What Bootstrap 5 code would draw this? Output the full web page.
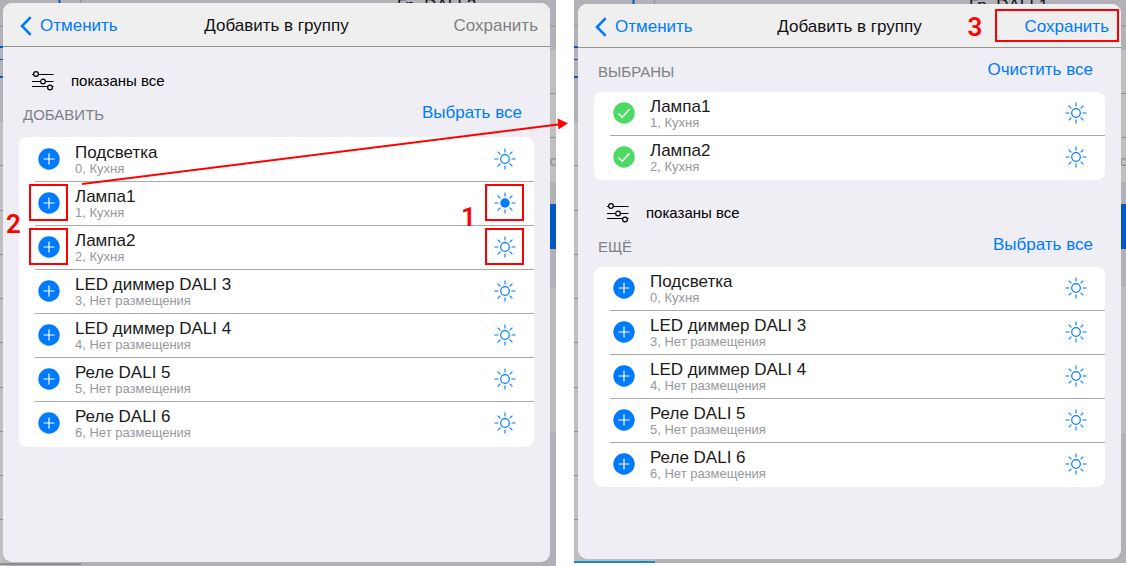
<!DOCTYPE html>
<html lang="ru">
<head>
<meta charset="utf-8">
<meta name="viewport" content="width=device-width, initial-scale=1">
<title>Добавить в группу</title>
<link href="https://cdn.jsdelivr.net/npm/bootstrap@5.3.0/dist/css/bootstrap.min.css" rel="stylesheet">
<style>
:root { --ios-blue: #007aff; --shade: #b2b1b8; --note: #f00; }
body { font-family: "Liberation Sans", Arial, sans-serif; font-size: 17px; line-height: 20px; color: #111; background: #fff; }
.guide { display: grid; grid-template-columns: 556fr 552fr; column-gap: 18px; min-height: 100vh; }
.screen { background: var(--shade); padding: 3px 6px 4px 3px; }
.screen-b { padding: 4px 5px 4px 4px; margin-bottom: 3px; }
.edge { top: 0; height: 100%; width: 250px; }
.behind { top: -4px; left: 397px; color: #111; }
.screen-b .behind { left: 395px; }
.cut { top: 151px; right: -1px; font-size: 15px; color: #8d8d90; }
.sheet { background: #eeeef4; border-radius: 9px; }
.top-bar { height: 44px; background: #efeff0; border-bottom: 1px solid #949494; border-radius: 9px 9px 0 0; padding: 3px 12px 0 17px; }
.plain { border: 0; background: none; padding: 0; color: var(--ios-blue); text-decoration: none; white-space: nowrap; }
.plain:disabled { color: #7f7f84; }
.filter { padding: 24px 0 0 29px; gap: 17px; font-size: 15px; color: #000; }
.screen-b .filter { padding-top: 23px; }
.section-head { padding: 12px 28px 0 20px; height: 46px; }
.screen-b .section-head { height: 44px; }
.section-head h2 { font-size: 15px; line-height: 20px; font-weight: 400; color: #808085; margin: 2px 0 0; }
.devices { background: #fff; border-radius: 8px; margin: 0 16px; list-style: none; padding: 0; }
.screen-a .devices { padding: 1px 0; }
.device { height: 44px; margin-left: 16px; padding: 0 18px 0 3px; border-bottom: 1px solid #aaa; }
.device:last-child { border-bottom-color: transparent; }
.device .plain { width: 22px; height: 22px; margin-bottom: 2px; }
.names { margin-left: 15px; }
.names div { line-height: 18px; color: #1a1a1a; }
.names small { display: block; font-size: 13px; line-height: 14px; color: #98989c; }
.frame { border: 2px solid var(--note); width: 39px; height: 37px; left: -9px; top: -8px; pointer-events: none; }
.frame-save { width: 124px; height: 33px; left: auto; right: -10px; top: -8px; }
.step { font-family: Roboto, sans-serif; font-weight: 600; font-size: 26px; line-height: 26px; color: var(--note); }
.step-add { left: -32px; top: 19px; }
.step-lamp { left: -33px; top: 12px; }
.step-save { left: -57px; top: -3px; }
.arrow { left: 82px; right: calc(50% - 5px); top: 118px; height: 68px; pointer-events: none; }
svg { display: block; }
</style>
</head>
<body>
<svg width="0" height="0" class="position-absolute" aria-hidden="true">
  <symbol id="add" viewBox="0 0 22 22"><circle cx="11" cy="11" r="10.7" fill="#007aff"/><path d="M11 5.500v11M5.500 11h11" stroke="#fff" stroke-width="1.200"/></symbol>
  <symbol id="done" viewBox="0 0 22 22"><circle cx="11" cy="11" r="10.700" fill="#4cd964"/><path d="M5.500 11.500l3.700 3.700 7.300-8" fill="none" stroke="#fff" stroke-width="1.500"/></symbol>
  <symbol id="rays" viewBox="0 0 22 22"><path d="M11 .5v4M11 17.500v4M.5 11h4M17.500 11h4M3.600 3.600l2.800 2.800M15.600 15.600l2.800 2.800M3.600 18.400l2.800-2.800M15.600 6.400l2.800-2.800" stroke="#007aff" stroke-width="1.100"/></symbol>
  <symbol id="sun" viewBox="0 0 22 22"><use href="#rays"/><circle cx="11" cy="11" r="4.300" fill="none" stroke="#007aff" stroke-width="1.200"/></symbol>
  <symbol id="sun-on" viewBox="0 0 22 22"><use href="#rays"/><circle cx="11" cy="11" r="4.700" fill="#007aff"/></symbol>
  <symbol id="sliders" viewBox="0 0 22 20"><g fill="none" stroke="#000" stroke-width="1.200"><path d="M0 3.500h1.500M6.500 3.500H21.500M0 10.500h8.500M13.500 10.500h8M0 15.500h15.500M20.500 15.500h1"/><circle cx="4" cy="3" r="2.400"/><circle cx="11" cy="10.500" r="2.400"/><circle cx="18" cy="16.500" r="2.400"/></g></symbol>
  <symbol id="back" viewBox="0 0 12 20"><path d="M10.700 1.200L2 10l8.700 8.800" fill="none" stroke="#007aff" stroke-width="2.600"/></symbol>
  <symbol id="edge-left" viewBox="0 0 250 566">
    <path d="M0 122h6v444H0z" fill="#bfbfc0"/>
    <path d="M0 26h6M0 165.500h6M0 210.500h6M0 254.500h6M0 298.500h6M0 342.500h6M0 387.500h6M0 431.500h6M0 475.500h6M0 519.500h6M80.500 0v5" stroke="#8f8f93"/>
    <path d="M0 47h6M0 77h6M59.500 0v5" stroke="#0058c4" stroke-width="2"/><path d="M0 59.500h6" stroke="#0058c4"/>
  </symbol>
  <symbol id="edge-right" viewBox="0 0 250 566">
    <path d="M240 50h10v132h-10z" fill="#bfbfc0"/><path d="M240 204h10v45h-10z" fill="#0058c4"/><path d="M240 287h10v146h-10z" fill="#bbbbc0"/>
    <path d="M240 26h10M240 93.500h10M240 137.500h10" stroke="#8f8f93"/>
  </symbol>
</svg>

<main class="guide position-relative">
  <section class="screen screen-a position-relative overflow-hidden d-flex">
    <svg class="edge position-absolute start-0" width="250" height="566" viewBox="0 0 250 566" preserveAspectRatio="xMinYMin slice" aria-hidden="true"><use href="#edge-left"/><path d="M0 562h80v2H0z" fill="#bfbfc0"/><path d="M0 564h81" stroke="#8f8f93" stroke-width="2"/></svg>
    <svg class="edge position-absolute end-0" width="250" height="566" viewBox="0 0 250 566" preserveAspectRatio="xMaxYMin slice" aria-hidden="true"><use href="#edge-right"/></svg>
    <span class="behind position-absolute">Гр. DALI 2</span><span class="cut position-absolute">с</span>
    <div class="sheet position-relative flex-grow-1">
      <header class="top-bar d-flex align-items-center justify-content-between position-relative">
        <button type="button" class="plain d-flex align-items-center gap-2"><svg width="12" height="20" aria-hidden="true"><use href="#back"/></svg>Отменить</button>
        <span class="position-absolute start-50 translate-middle-x text-nowrap">Добавить в группу</span>
        <button type="button" class="plain" disabled>Сохранить</button>
      </header>
      <div class="filter d-flex align-items-center"><svg width="22" height="20" aria-hidden="true"><use href="#sliders"/></svg>показаны все</div>
      <div class="section-head d-flex justify-content-between align-items-start"><h2>ДОБАВИТЬ</h2><a href="#" class="plain">Выбрать все</a></div>
      <ul class="devices">
        <li class="device d-flex align-items-center"><button class="plain" aria-label="Добавить"><svg width="22" height="22"><use href="#add"/></svg></button><div class="names flex-grow-1"><div>Подсветка</div><small>0, Кухня</small></div><button class="plain" aria-label="Включить"><svg width="22" height="22"><use href="#sun"/></svg></button></li>
        <li class="device d-flex align-items-center"><button class="plain position-relative" aria-label="Добавить"><svg width="22" height="22"><use href="#add"/></svg><span class="frame position-absolute"></span><span class="step step-add position-absolute">2</span></button><div class="names flex-grow-1"><div>Лампа1</div><small>1, Кухня</small></div><button class="plain position-relative" aria-label="Выключить"><svg width="22" height="22"><use href="#sun-on"/></svg><span class="frame position-absolute"></span><span class="step step-lamp position-absolute">1</span></button></li>
        <li class="device d-flex align-items-center"><button class="plain position-relative" aria-label="Добавить"><svg width="22" height="22"><use href="#add"/></svg><span class="frame position-absolute"></span></button><div class="names flex-grow-1"><div>Лампа2</div><small>2, Кухня</small></div><button class="plain position-relative" aria-label="Включить"><svg width="22" height="22"><use href="#sun"/></svg><span class="frame position-absolute"></span></button></li>
        <li class="device d-flex align-items-center"><button class="plain" aria-label="Добавить"><svg width="22" height="22"><use href="#add"/></svg></button><div class="names flex-grow-1"><div>LED диммер DALI 3</div><small>3, Нет размещения</small></div><button class="plain" aria-label="Включить"><svg width="22" height="22"><use href="#sun"/></svg></button></li>
        <li class="device d-flex align-items-center"><button class="plain" aria-label="Добавить"><svg width="22" height="22"><use href="#add"/></svg></button><div class="names flex-grow-1"><div>LED диммер DALI 4</div><small>4, Нет размещения</small></div><button class="plain" aria-label="Включить"><svg width="22" height="22"><use href="#sun"/></svg></button></li>
        <li class="device d-flex align-items-center"><button class="plain" aria-label="Добавить"><svg width="22" height="22"><use href="#add"/></svg></button><div class="names flex-grow-1"><div>Реле DALI 5</div><small>5, Нет размещения</small></div><button class="plain" aria-label="Включить"><svg width="22" height="22"><use href="#sun"/></svg></button></li>
        <li class="device d-flex align-items-center"><button class="plain" aria-label="Добавить"><svg width="22" height="22"><use href="#add"/></svg></button><div class="names flex-grow-1"><div>Реле DALI 6</div><small>6, Нет размещения</small></div><button class="plain" aria-label="Включить"><svg width="22" height="22"><use href="#sun"/></svg></button></li>
      </ul>
    </div>
  </section>

  <section class="screen screen-b position-relative overflow-hidden d-flex">
    <svg class="edge position-absolute start-0" width="250" height="566" viewBox="0 0 250 566" preserveAspectRatio="xMinYMin slice" aria-hidden="true"><use href="#edge-left"/><path d="M0 559h81v3H0z" fill="#bfbfc0"/><path d="M0 562h81" stroke="#1489c4" stroke-width="2"/></svg>
    <svg class="edge position-absolute end-0" width="250" height="566" viewBox="0 0 250 566" preserveAspectRatio="xMaxYMin slice" aria-hidden="true"><use href="#edge-right"/></svg>
    <span class="behind position-absolute">Гр. DALI 1</span><span class="cut position-absolute">с</span>
    <div class="sheet position-relative flex-grow-1">
      <header class="top-bar d-flex align-items-center justify-content-between position-relative">
        <button type="button" class="plain d-flex align-items-center gap-2"><svg width="12" height="20" aria-hidden="true"><use href="#back"/></svg>Отменить</button>
        <span class="position-absolute start-50 translate-middle-x text-nowrap">Добавить в группу</span>
        <button type="button" class="plain position-relative">Сохранить<span class="frame frame-save position-absolute"></span><span class="step step-save position-absolute">3</span></button>
      </header>
      <div class="section-head d-flex justify-content-between align-items-start"><h2>ВЫБРАНЫ</h2><a href="#" class="plain">Очистить все</a></div>
      <ul class="devices">
        <li class="device d-flex align-items-center"><button class="plain" aria-label="Убрать"><svg width="22" height="22"><use href="#done"/></svg></button><div class="names flex-grow-1"><div>Лампа1</div><small>1, Кухня</small></div><button class="plain" aria-label="Включить"><svg width="22" height="22"><use href="#sun"/></svg></button></li>
        <li class="device d-flex align-items-center"><button class="plain" aria-label="Убрать"><svg width="22" height="22"><use href="#done"/></svg></button><div class="names flex-grow-1"><div>Лампа2</div><small>2, Кухня</small></div><button class="plain" aria-label="Включить"><svg width="22" height="22"><use href="#sun"/></svg></button></li>
      </ul>
      <div class="filter d-flex align-items-center"><svg width="22" height="20" aria-hidden="true"><use href="#sliders"/></svg>показаны все</div>
      <div class="section-head d-flex justify-content-between align-items-start"><h2>ЕЩЁ</h2><a href="#" class="plain">Выбрать все</a></div>
      <ul class="devices">
        <li class="device d-flex align-items-center"><button class="plain" aria-label="Добавить"><svg width="22" height="22"><use href="#add"/></svg></button><div class="names flex-grow-1"><div>Подсветка</div><small>0, Кухня</small></div><button class="plain" aria-label="Включить"><svg width="22" height="22"><use href="#sun"/></svg></button></li>
        <li class="device d-flex align-items-center"><button class="plain" aria-label="Добавить"><svg width="22" height="22"><use href="#add"/></svg></button><div class="names flex-grow-1"><div>LED диммер DALI 3</div><small>3, Нет размещения</small></div><button class="plain" aria-label="Включить"><svg width="22" height="22"><use href="#sun"/></svg></button></li>
        <li class="device d-flex align-items-center"><button class="plain" aria-label="Добавить"><svg width="22" height="22"><use href="#add"/></svg></button><div class="names flex-grow-1"><div>LED диммер DALI 4</div><small>4, Нет размещения</small></div><button class="plain" aria-label="Включить"><svg width="22" height="22"><use href="#sun"/></svg></button></li>
        <li class="device d-flex align-items-center"><button class="plain" aria-label="Добавить"><svg width="22" height="22"><use href="#add"/></svg></button><div class="names flex-grow-1"><div>Реле DALI 5</div><small>5, Нет размещения</small></div><button class="plain" aria-label="Включить"><svg width="22" height="22"><use href="#sun"/></svg></button></li>
        <li class="device d-flex align-items-center"><button class="plain" aria-label="Добавить"><svg width="22" height="22"><use href="#add"/></svg></button><div class="names flex-grow-1"><div>Реле DALI 6</div><small>6, Нет размещения</small></div><button class="plain" aria-label="Включить"><svg width="22" height="22"><use href="#sun"/></svg></button></li>
      </ul>
    </div>
  </section>

  <div class="arrow position-absolute"><svg width="100%" height="100%" viewBox="0 0 486 68" preserveAspectRatio="none" aria-hidden="true"><path d="M0 66L478 6.200" stroke="#f00" stroke-width="2"/><path d="M475.500 0.500L486 5.200 476.500 11.500z" fill="#f00"/></svg></div>
</main>
<script src="https://cdn.jsdelivr.net/npm/bootstrap@5.3.0/dist/js/bootstrap.bundle.min.js"></script>
</body>
</html>
